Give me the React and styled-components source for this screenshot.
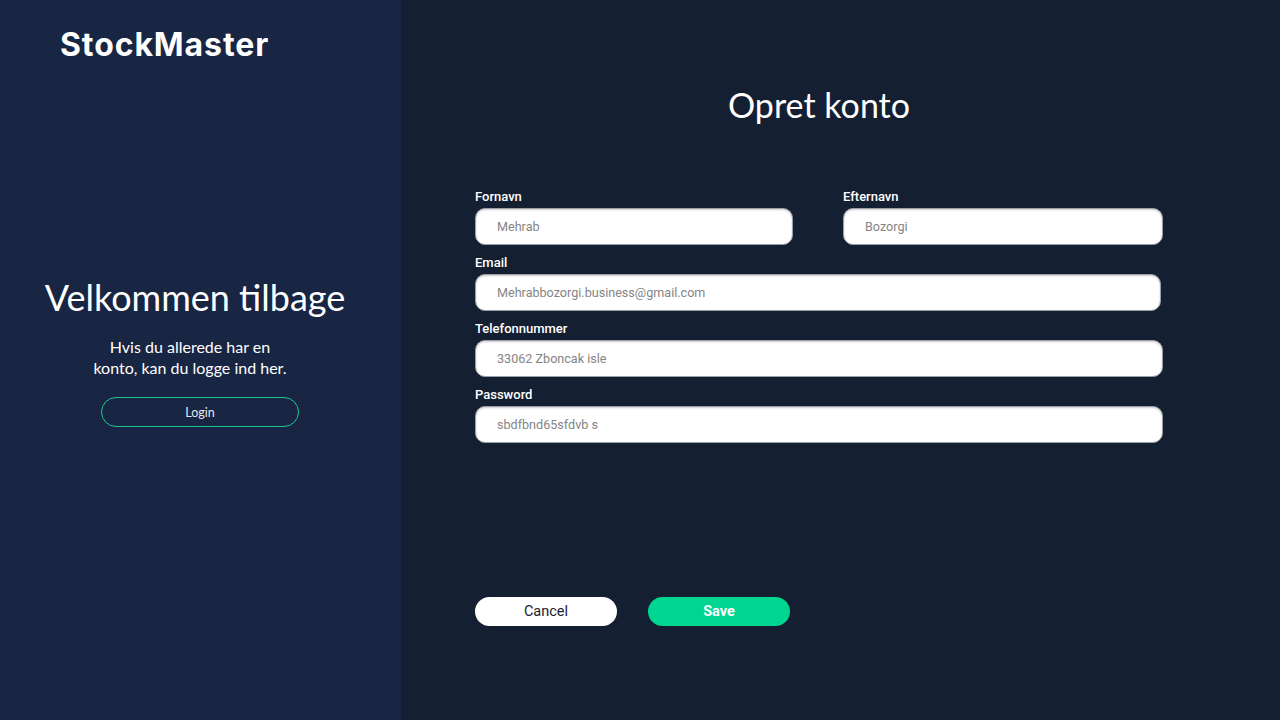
import styled, { createGlobalStyle } from "styled-components";

const GlobalStyle = createGlobalStyle`
   html, body {
      margin: 0;
      padding: 0;
      background: #151f32;
   }
   * {
      box-sizing: border-box;
   }
`;

const fields = [
   [
      { label: "Fornavn", value: "Mehrab" },
      { label: "Efternavn", value: "Bozorgi" },
   ],
   [{ label: "Email", value: "Mehrabbozorgi.business@gmail.com", narrow: true }],
   [{ label: "Telefonnummer", value: "33062 Zboncak isle" }],
   [{ label: "Password", value: "sbdfbnd65sfdvb s" }],
];

export default function App() {
   return (
      <Page>
         <GlobalStyle />
         <Sidebar>
            <Logo>StockMaster</Logo>
            <Welcome>
               <WelcomeTitle>Velkommen tilbage</WelcomeTitle>
               <WelcomeText>
                  Hvis du allerede har en
                  <br />
                  konto, kan du logge ind her.
               </WelcomeText>
               <LoginButton>Login</LoginButton>
            </Welcome>
         </Sidebar>
         <Main>
            <FormArea>
               <Title>Opret konto</Title>
               <Form>
                  {fields.map((row, i) => (
                     <Row key={i} $cols={row.length}>
                        {row.map((f) => (
                           <Field key={f.label}>
                              <Label>{f.label}</Label>
                              <Input $narrow={f.narrow}>{f.value}</Input>
                           </Field>
                        ))}
                     </Row>
                  ))}
               </Form>
               <Actions>
                  <Button>Cancel</Button>
                  <Button $primary>Save</Button>
               </Actions>
            </FormArea>
         </Main>
      </Page>
   );
}

const Page = styled.div`
   display: flex;
   width: 1280px;
   height: 720px;
   overflow: hidden;
`;

const Sidebar = styled.aside`
   width: 401px;
   flex-shrink: 0;
   background: #182543;
   display: flex;
   flex-direction: column;
   padding: 26px 0 0 60px;
`;

const Logo = styled.div`
   font-family: "Inter", sans-serif;
   font-weight: 700;
   font-size: 32px;
   line-height: 38px;
   color: #ffffff;
   letter-spacing: 0.9px;
`;

const Welcome = styled.div`
   margin: 212px 0 0 -60px;
   width: 390px;
   display: flex;
   flex-direction: column;
   align-items: center;
`;

const WelcomeTitle = styled.h1`
   margin: 0;
   font-family: "Lato", sans-serif;
   font-weight: 400;
   font-size: 36px;
   line-height: 42px;
   color: #ffffff;
`;

const WelcomeText = styled.p`
   margin: 18px 10px 0 0;
   font-family: "Lato", sans-serif;
   font-size: 16px;
   line-height: 21px;
   color: #ffffff;
   text-align: center;
`;

const LoginButton = styled.button`
   margin: 19px 0 0 10px;
   width: 198px;
   height: 30px;
   border: 1.5px solid #1fc98f;
   border-radius: 15px;
   background: transparent;
   color: #e4e7ee;
   font-family: "Lato", sans-serif;
   font-size: 12.5px;
`;

const Main = styled.main`
   flex: 1;
   background: #151f32;
   padding: 0 0 0 74px;
`;

const FormArea = styled.div`
   width: 688px;
   display: flex;
   flex-direction: column;
`;

const Title = styled.h2`
   margin: 84px 0 0;
   text-align: center;
   font-family: "Lato", sans-serif;
   font-weight: 400;
   font-size: 34px;
   line-height: 42px;
   color: #ffffff;
`;

const Form = styled.div`
   margin-top: 63px;
   display: flex;
   flex-direction: column;
   gap: 10px;
`;

const Row = styled.div`
   display: grid;
   grid-template-columns: ${(p) => (p.$cols > 1 ? "318px 320px" : "1fr")};
   column-gap: 50px;
`;

const Field = styled.div`
   display: flex;
   flex-direction: column;
   gap: 3px;
`;

const Label = styled.label`
   font-family: "Roboto", sans-serif;
   font-weight: 500;
   font-size: 13px;
   line-height: 16px;
   color: #ffffff;
`;

const Input = styled.div`
   width: ${(p) => (p.$narrow ? "686px" : "100%")};
   height: 37px;
   background: #ffffff;
   border: 1px solid #9a9ea6;
   border-radius: 10px;
   box-shadow: inset 0 1px 2px rgba(0, 0, 0, 0.2);
   padding: 0 21px;
   display: flex;
   align-items: center;
   font-family: "Roboto", sans-serif;
   font-size: 12.6px;
   color: #858585;
`;

const Actions = styled.div`
   margin-top: 154px;
   display: flex;
   gap: 31px;
`;

const Button = styled.button`
   width: 142px;
   height: 29px;
   border: none;
   border-radius: 15px;
   background: ${(p) => (p.$primary ? "#00d68f" : "#ffffff")};
   color: ${(p) => (p.$primary ? "#ffffff" : "#1a2233")};
   font-family: "Roboto", sans-serif;
   font-weight: ${(p) => (p.$primary ? 700 : 400)};
   font-size: 14.5px;
`;
